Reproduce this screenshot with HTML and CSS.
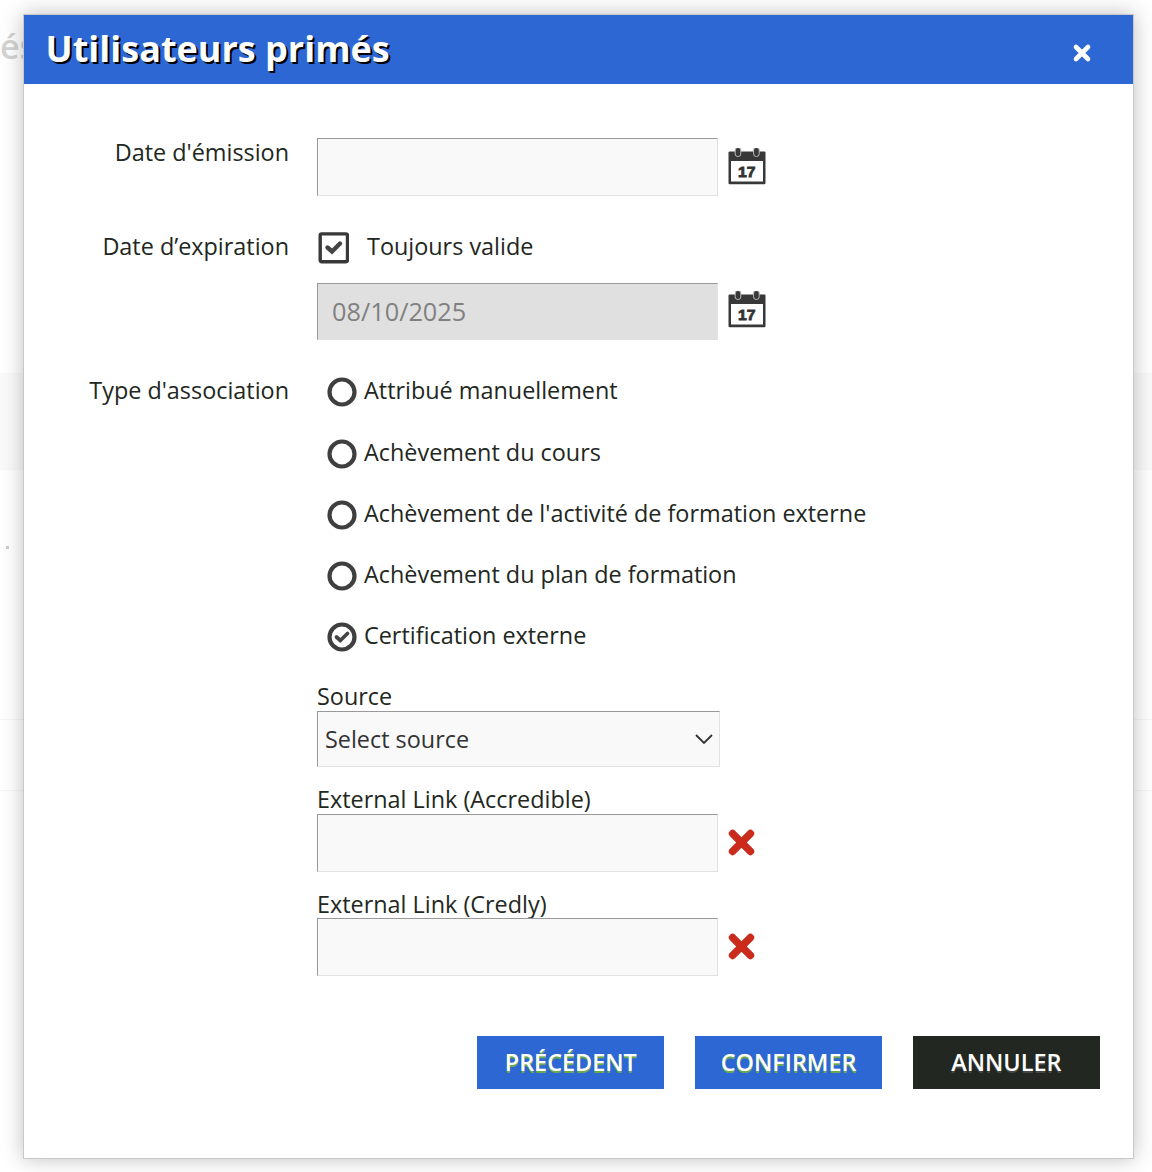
FILE: index.html
```html
<!DOCTYPE html>
<html lang="fr">
<head>
  <meta charset="UTF-8" />
  <meta name="viewport" content="width=device-width, initial-scale=1" />
  <title>Utilisateurs primés</title>
  <link rel="stylesheet" href="styles.css">
</head>
<body>

  <!-- Page behind the dialog -->
  <div class="page">
    <div class="page-title">és</div>
    <div class="page-row shaded"></div>
    <div class="page-row tall"><span class="dot"></span></div>
    <div class="page-row"></div>
  </div>

  <svg class="sprites" width="0" height="0">
    <symbol id="calendar" viewBox="0 0 38 38">
      <path d="M1.5 3.5h35q1 0 1 1v30.500q0 1.200-1.200 1.200h-34.600q-1.200 0-1.200-1.200v-30.500q0-1 1-1z" fill="#383838"/>
      <path d="M3 13h32v20.500h-32z" fill="#fff"/>
      <rect x="7.200" y="-.5" width="5.600" height="9" rx="2.600" fill="#383838" stroke="#bbb" stroke-width="1"/>
      <rect x="25.600" y="-.5" width="5.600" height="9" rx="2.600" fill="#383838" stroke="#bbb" stroke-width="1"/>
      <text x="10" y="28.500" textLength="17.500" lengthAdjust="spacingAndGlyphs" class="calendar-day">17</text>
    </symbol>
    <symbol id="cross" viewBox="0 0 28 28">
      <path d="M4.600 4.600l17.800 17.800M22.400 4.600L4.600 22.400" stroke="currentColor" stroke-width="7.600" stroke-linecap="round"/>
    </symbol>
    <symbol id="radio" viewBox="0 0 30 30">
      <circle cx="15" cy="15" r="12.5" fill="#fff" stroke="#3f3f3f" stroke-width="4.2"/>
    </symbol>
  </svg>

  <div class="dialog">
    <div class="dialog-header">
      <h2>Utilisateurs primés</h2>
      <button class="close-btn">
        <svg width="20" height="20" viewBox="0 0 20 20"><path d="M4 4l12 12M16 4L4 16" stroke="#fff" stroke-width="4.6" stroke-linecap="round"/></svg>
      </button>
    </div>

    <form class="form">
      <div class="form-row issue-row">
        <div class="label">Date d'émission</div>
        <div class="field">
          <div class="input-line">
            <input type="text" class="input">
            <svg class="calendar"><use href="#calendar"/></svg>
          </div>
        </div>
      </div>

      <div class="form-row expiry-row">
        <div class="label">Date d’expiration</div>
        <div class="field">
          <div class="check-line">
            <svg width="32" height="32" viewBox="0 0 32 32">
              <rect x="3.2" y="1.9" width="27.3" height="27.8" rx="1.5" fill="#fff" stroke="#383838" stroke-width="3.4"/>
              <path d="M10.500 15.500l4.500 4L23 11.500" fill="none" stroke="#444" stroke-width="4.400" stroke-linecap="round"/>
            </svg>
            <span>Toujours valide</span>
          </div>
          <div class="input-line">
            <input type="text" class="input disabled" value="08/10/2025" disabled>
            <svg class="calendar raised"><use href="#calendar"/></svg>
          </div>
        </div>
      </div>

      <div class="form-row">
        <div class="label">Type d'association</div>
        <div class="field">
          <div class="radio-line"><svg class="radio"><use href="#radio"/></svg>Attribué manuellement</div>
          <div class="radio-line"><svg class="radio"><use href="#radio"/></svg>Achèvement du cours</div>
          <div class="radio-line"><svg class="radio"><use href="#radio"/></svg>Achèvement de l'activité de formation externe</div>
          <div class="radio-line"><svg class="radio"><use href="#radio"/></svg>Achèvement du plan de formation</div>
          <div class="radio-line">
            <svg class="radio" viewBox="0 0 30 30">
              <use href="#radio"/>
              <path d="M9.500 15l3.800 3.500 7.200-7" fill="none" stroke="#444" stroke-width="3.800" stroke-linecap="round"/>
            </svg>Certification externe
          </div>

          <div class="sub-label">Source</div>
          <div class="select">
            <span>Select source</span>
            <svg width="20" height="12" viewBox="0 0 20 12"><path d="M2 2l8 8 8-8" fill="none" stroke="#333" stroke-width="1.8"/></svg>
          </div>

          <div class="sub-label">External Link (Accredible)</div>
          <div class="input-line link-line">
            <input type="text" class="input">
            <svg class="delete"><use href="#cross"/></svg>
          </div>

          <div class="sub-label last">External Link (Credly)</div>
          <div class="input-line">
            <input type="text" class="input">
            <svg class="delete"><use href="#cross"/></svg>
          </div>
        </div>
      </div>

      <div class="buttons">
        <button type="button" class="btn">PRÉCÉDENT</button>
        <button type="button" class="btn">CONFIRMER</button>
        <button type="button" class="btn cancel">ANNULER</button>
      </div>
    </form>
  </div>

</body>
</html>
```
FILE: styles.css
```css
* {
  box-sizing: border-box;
}
body {
  margin: 0;
  height: 1172px;
  position: relative;
  overflow: hidden;
  background: #fff;
  color: #222721;
  font-family: "Open Sans", "Noto Sans", sans-serif;
  font-size: 23.4px;
  line-height: 29px;
}
.sprites {
  position: absolute;
}

/* Page behind */
.page-title {
  height: 373px;
  padding-top: 29px;
  color: #d3d3d3;
  font-size: 34px;
  font-weight: 600;
  line-height: 34px;
}
.page-row {
  height: 71px;
  border-bottom: 1px solid #f7f7f7;
}
.page-row.shaded {
  height: 97px;
  border-top: 1px solid #f7f7f7;
  background: #fafafa;
}
.page-row.tall {
  height: 250px;
  padding: 76px 0 0 6px;
}
.dot {
  display: block;
  width: 3px;
  height: 3px;
  background: #ccc;
}

/* Dialog */
.dialog {
  position: absolute;
  top: 14px;
  left: 23px;
  width: 1111px;
  height: 1145px;
  border: 1px solid #c8c8c8;
  background: #fff;
  box-shadow: 0 0 20px rgba(0, 0, 0, 0.25);
}
.dialog-header {
  display: flex;
  justify-content: space-between;
  height: 69px;
  padding: 0 41px 0 21.5px;
  background: #2d67d3;
}
.dialog-header h2 {
  margin: 0;
  color: #fff;
  font-size: 36px;
  font-weight: 700;
  line-height: 67px;
  text-shadow: 2px 2px 0 #000;
}
.close-btn {
  display: flex;
  margin: 28px 0 auto;
  padding: 0;
  border: none;
  background: none;
}

/* Form */
.form {
  padding: 54px 33px 0 0;
}
.form-row {
  display: grid;
  grid-template-columns: 265px 1fr;
  column-gap: 28px;
}
.issue-row {
  height: 94px;
}
.expiry-row {
  height: 144px;
}
.label {
  text-align: right;
}
.input-line {
  display: flex;
  align-items: center;
  gap: 10px;
}
.input {
  width: 401px;
  height: 58px;
  padding: 0 14px;
  border: 1px solid #e2e2e2;
  border-top-color: #999;
  border-left-color: #999;
  border-radius: 0;
  background: #f9f9f9;
  font-family: inherit;
  font-size: 25.3px;
}
.input.disabled {
  height: 57px;
  padding-bottom: 1px;
  border-bottom-color: #e0e0e0;
  background: #e0e0e0;
  color: #808080;
}
.calendar {
  width: 38px;
  height: 38px;
  margin-bottom: 1px;
  overflow: visible;
}
.calendar.raised {
  margin-bottom: 3px;
}
.calendar-day {
  fill: #333;
  font-family: "Liberation Sans", sans-serif;
  font-size: 14.5px;
  font-weight: 700;
  stroke: #333;
  stroke-width: 0.8px;
}
.check-line {
  display: flex;
  gap: 18px;
  height: 51px;
}
.radio-line {
  display: flex;
  gap: 7px;
  height: 61px;
  padding-left: 10px;
}
.radio-line:first-child {
  height: 62px;
}
.radio {
  width: 30px;
  height: 30px;
  margin-top: 1px;
}
.sub-label {
  height: 29px;
}
.sub-label.last {
  line-height: 31px;
}
.select {
  display: flex;
  justify-content: space-between;
  align-items: center;
  width: 403px;
  height: 56px;
  margin-bottom: 18px;
  padding: 0 5px 0 7px;
  border: 1px solid #e2e2e2;
  border-top-color: #999;
  border-left-color: #999;
  background: #f9f9f9;
  color: #333;
  line-height: 30px;
}
.link-line {
  margin-bottom: 17px;
}
.delete {
  width: 28px;
  height: 28px;
  color: #cb2b1d;
}

/* Footer */
.buttons {
  display: flex;
  justify-content: flex-end;
  gap: 30.5px;
  margin-top: 60px;
}
.btn {
  width: 187.3px;
  height: 53px;
  padding: 0 0 1px;
  border: none;
  background: #2d67d3;
  color: #fff;
  font-family: inherit;
  font-size: 23.4px;
  font-weight: 600;
  text-shadow: 0 2px 0 #6aa84f;
}
.btn.cancel {
  background: #222721;
  text-shadow: 0 2px 0 #444;
}
```
